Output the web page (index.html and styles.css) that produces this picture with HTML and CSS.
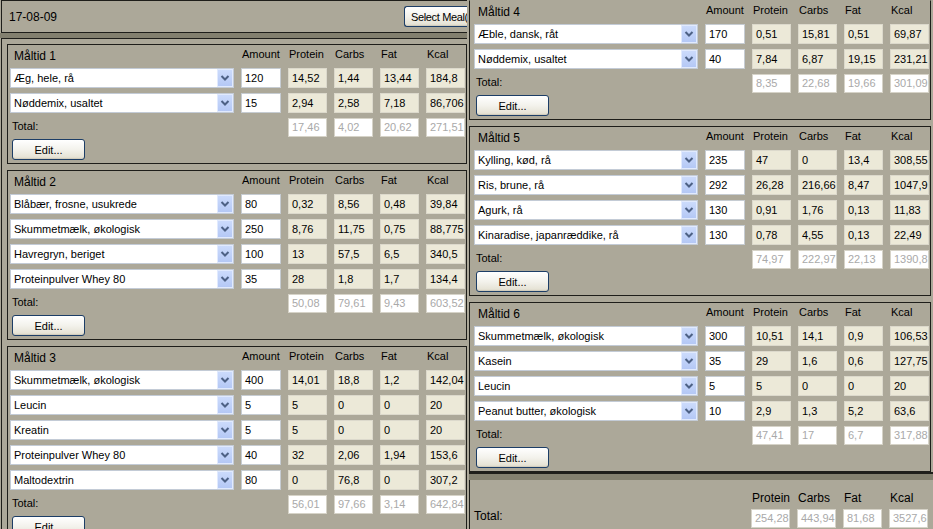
FILE: index.html
```html
<!DOCTYPE html>
<html lang="da">
<head>
  <meta charset="UTF-8">
  <title>Kostplan 17-08-09</title>
  <link rel="stylesheet" href="styles.css">
</head>
<body>
  <div class="app">
    <div class="pane pane-left">
      <div class="topbar">
        <span class="date">17-08-09</span>
        <button class="btn btn-select">Select Meal(s)...</button>
      </div>
      <div class="band"></div>
      <div class="meals">

        <div class="meal">
          <div class="grid">
            <div class="title">Måltid 1</div><div class="head">Amount</div><div class="head">Protein</div><div class="head">Carbs</div><div class="head">Fat</div><div class="head">Kcal</div>

            <div class="combo"><span>Æg, hele, rå</span><i class="arrow"><svg width="16" height="18" viewBox="0 0 16 18"><path d="M4.5 7 8 10.5 11.5 7" fill="none" stroke="#4d6185" stroke-width="2"/></svg></i></div>
            <div class="amount">120</div><div class="num">14,52</div><div class="num">1,44</div><div class="num">13,44</div><div class="num">184,8</div>

            <div class="combo"><span>Nøddemix, usaltet</span><i class="arrow"><svg width="16" height="18" viewBox="0 0 16 18"><path d="M4.5 7 8 10.5 11.5 7" fill="none" stroke="#4d6185" stroke-width="2"/></svg></i></div>
            <div class="amount">15</div><div class="num">2,94</div><div class="num">2,58</div><div class="num">7,18</div><div class="num">86,706</div>

            <div class="total-label">Total:</div><div class="sum">17,46</div><div class="sum">4,02</div><div class="sum">20,62</div><div class="sum">271,51</div>
          </div>
          <button class="btn btn-edit">Edit...</button>
        </div>

        <div class="meal">
          <div class="grid">
            <div class="title">Måltid 2</div><div class="head">Amount</div><div class="head">Protein</div><div class="head">Carbs</div><div class="head">Fat</div><div class="head">Kcal</div>

            <div class="combo"><span>Blåbær, frosne, usukrede</span><i class="arrow"><svg width="16" height="18" viewBox="0 0 16 18"><path d="M4.5 7 8 10.5 11.5 7" fill="none" stroke="#4d6185" stroke-width="2"/></svg></i></div>
            <div class="amount">80</div><div class="num">0,32</div><div class="num">8,56</div><div class="num">0,48</div><div class="num">39,84</div>

            <div class="combo"><span>Skummetmælk, økologisk</span><i class="arrow"><svg width="16" height="18" viewBox="0 0 16 18"><path d="M4.5 7 8 10.5 11.5 7" fill="none" stroke="#4d6185" stroke-width="2"/></svg></i></div>
            <div class="amount">250</div><div class="num">8,76</div><div class="num">11,75</div><div class="num">0,75</div><div class="num">88,775</div>

            <div class="combo"><span>Havregryn, beriget</span><i class="arrow"><svg width="16" height="18" viewBox="0 0 16 18"><path d="M4.5 7 8 10.5 11.5 7" fill="none" stroke="#4d6185" stroke-width="2"/></svg></i></div>
            <div class="amount">100</div><div class="num">13</div><div class="num">57,5</div><div class="num">6,5</div><div class="num">340,5</div>

            <div class="combo"><span>Proteinpulver Whey 80</span><i class="arrow"><svg width="16" height="18" viewBox="0 0 16 18"><path d="M4.5 7 8 10.5 11.5 7" fill="none" stroke="#4d6185" stroke-width="2"/></svg></i></div>
            <div class="amount">35</div><div class="num">28</div><div class="num">1,8</div><div class="num">1,7</div><div class="num">134,4</div>

            <div class="total-label">Total:</div><div class="sum">50,08</div><div class="sum">79,61</div><div class="sum">9,43</div><div class="sum">603,52</div>
          </div>
          <button class="btn btn-edit">Edit...</button>
        </div>

        <div class="meal">
          <div class="grid">
            <div class="title">Måltid 3</div><div class="head">Amount</div><div class="head">Protein</div><div class="head">Carbs</div><div class="head">Fat</div><div class="head">Kcal</div>

            <div class="combo"><span>Skummetmælk, økologisk</span><i class="arrow"><svg width="16" height="18" viewBox="0 0 16 18"><path d="M4.5 7 8 10.5 11.5 7" fill="none" stroke="#4d6185" stroke-width="2"/></svg></i></div>
            <div class="amount">400</div><div class="num">14,01</div><div class="num">18,8</div><div class="num">1,2</div><div class="num">142,04</div>

            <div class="combo"><span>Leucin</span><i class="arrow"><svg width="16" height="18" viewBox="0 0 16 18"><path d="M4.5 7 8 10.5 11.5 7" fill="none" stroke="#4d6185" stroke-width="2"/></svg></i></div>
            <div class="amount">5</div><div class="num">5</div><div class="num">0</div><div class="num">0</div><div class="num">20</div>

            <div class="combo"><span>Kreatin</span><i class="arrow"><svg width="16" height="18" viewBox="0 0 16 18"><path d="M4.5 7 8 10.5 11.5 7" fill="none" stroke="#4d6185" stroke-width="2"/></svg></i></div>
            <div class="amount">5</div><div class="num">5</div><div class="num">0</div><div class="num">0</div><div class="num">20</div>

            <div class="combo"><span>Proteinpulver Whey 80</span><i class="arrow"><svg width="16" height="18" viewBox="0 0 16 18"><path d="M4.5 7 8 10.5 11.5 7" fill="none" stroke="#4d6185" stroke-width="2"/></svg></i></div>
            <div class="amount">40</div><div class="num">32</div><div class="num">2,06</div><div class="num">1,94</div><div class="num">153,6</div>

            <div class="combo"><span>Maltodextrin</span><i class="arrow"><svg width="16" height="18" viewBox="0 0 16 18"><path d="M4.5 7 8 10.5 11.5 7" fill="none" stroke="#4d6185" stroke-width="2"/></svg></i></div>
            <div class="amount">80</div><div class="num">0</div><div class="num">76,8</div><div class="num">0</div><div class="num">307,2</div>

            <div class="total-label">Total:</div><div class="sum">56,01</div><div class="sum">97,66</div><div class="sum">3,14</div><div class="sum">642,84</div>
          </div>
          <button class="btn btn-edit">Edit...</button>
        </div>

      </div>
    </div>

    <div class="pane pane-right">
      <div class="meals">

        <div class="meal first">
          <div class="grid">
            <div class="title">Måltid 4</div><div class="head">Amount</div><div class="head">Protein</div><div class="head">Carbs</div><div class="head">Fat</div><div class="head">Kcal</div>

            <div class="combo"><span>Æble, dansk, råt</span><i class="arrow"><svg width="16" height="18" viewBox="0 0 16 18"><path d="M4.5 7 8 10.5 11.5 7" fill="none" stroke="#4d6185" stroke-width="2"/></svg></i></div>
            <div class="amount">170</div><div class="num">0,51</div><div class="num">15,81</div><div class="num">0,51</div><div class="num">69,87</div>

            <div class="combo"><span>Nøddemix, usaltet</span><i class="arrow"><svg width="16" height="18" viewBox="0 0 16 18"><path d="M4.5 7 8 10.5 11.5 7" fill="none" stroke="#4d6185" stroke-width="2"/></svg></i></div>
            <div class="amount">40</div><div class="num">7,84</div><div class="num">6,87</div><div class="num">19,15</div><div class="num">231,21</div>

            <div class="total-label">Total:</div><div class="sum">8,35</div><div class="sum">22,68</div><div class="sum">19,66</div><div class="sum">301,09</div>
          </div>
          <button class="btn btn-edit">Edit...</button>
        </div>

        <div class="meal">
          <div class="grid">
            <div class="title">Måltid 5</div><div class="head">Amount</div><div class="head">Protein</div><div class="head">Carbs</div><div class="head">Fat</div><div class="head">Kcal</div>

            <div class="combo"><span>Kylling, kød, rå</span><i class="arrow"><svg width="16" height="18" viewBox="0 0 16 18"><path d="M4.5 7 8 10.5 11.5 7" fill="none" stroke="#4d6185" stroke-width="2"/></svg></i></div>
            <div class="amount">235</div><div class="num">47</div><div class="num">0</div><div class="num">13,4</div><div class="num">308,55</div>

            <div class="combo"><span>Ris, brune, rå</span><i class="arrow"><svg width="16" height="18" viewBox="0 0 16 18"><path d="M4.5 7 8 10.5 11.5 7" fill="none" stroke="#4d6185" stroke-width="2"/></svg></i></div>
            <div class="amount">292</div><div class="num">26,28</div><div class="num">216,66</div><div class="num">8,47</div><div class="num">1047,9</div>

            <div class="combo"><span>Agurk, rå</span><i class="arrow"><svg width="16" height="18" viewBox="0 0 16 18"><path d="M4.5 7 8 10.5 11.5 7" fill="none" stroke="#4d6185" stroke-width="2"/></svg></i></div>
            <div class="amount">130</div><div class="num">0,91</div><div class="num">1,76</div><div class="num">0,13</div><div class="num">11,83</div>

            <div class="combo"><span>Kinaradise, japanræddike, rå</span><i class="arrow"><svg width="16" height="18" viewBox="0 0 16 18"><path d="M4.5 7 8 10.5 11.5 7" fill="none" stroke="#4d6185" stroke-width="2"/></svg></i></div>
            <div class="amount">130</div><div class="num">0,78</div><div class="num">4,55</div><div class="num">0,13</div><div class="num">22,49</div>

            <div class="total-label">Total:</div><div class="sum">74,97</div><div class="sum">222,97</div><div class="sum">22,13</div><div class="sum">1390,8</div>
          </div>
          <button class="btn btn-edit">Edit...</button>
        </div>

        <div class="meal">
          <div class="grid">
            <div class="title">Måltid 6</div><div class="head">Amount</div><div class="head">Protein</div><div class="head">Carbs</div><div class="head">Fat</div><div class="head">Kcal</div>

            <div class="combo"><span>Skummetmælk, økologisk</span><i class="arrow"><svg width="16" height="18" viewBox="0 0 16 18"><path d="M4.5 7 8 10.5 11.5 7" fill="none" stroke="#4d6185" stroke-width="2"/></svg></i></div>
            <div class="amount">300</div><div class="num">10,51</div><div class="num">14,1</div><div class="num">0,9</div><div class="num">106,53</div>

            <div class="combo"><span>Kasein</span><i class="arrow"><svg width="16" height="18" viewBox="0 0 16 18"><path d="M4.5 7 8 10.5 11.5 7" fill="none" stroke="#4d6185" stroke-width="2"/></svg></i></div>
            <div class="amount">35</div><div class="num">29</div><div class="num">1,6</div><div class="num">0,6</div><div class="num">127,75</div>

            <div class="combo"><span>Leucin</span><i class="arrow"><svg width="16" height="18" viewBox="0 0 16 18"><path d="M4.5 7 8 10.5 11.5 7" fill="none" stroke="#4d6185" stroke-width="2"/></svg></i></div>
            <div class="amount">5</div><div class="num">5</div><div class="num">0</div><div class="num">0</div><div class="num">20</div>

            <div class="combo"><span>Peanut butter, økologisk</span><i class="arrow"><svg width="16" height="18" viewBox="0 0 16 18"><path d="M4.5 7 8 10.5 11.5 7" fill="none" stroke="#4d6185" stroke-width="2"/></svg></i></div>
            <div class="amount">10</div><div class="num">2,9</div><div class="num">1,3</div><div class="num">5,2</div><div class="num">63,6</div>

            <div class="total-label">Total:</div><div class="sum">47,41</div><div class="sum">17</div><div class="sum">6,7</div><div class="sum">317,88</div>
          </div>
          <button class="btn btn-edit">Edit...</button>
        </div>

      </div>
      <div class="band band-bottom"></div>
      <div class="summary">
        <div class="summary-grid">
          <div></div><div class="head">Protein</div><div class="head">Carbs</div><div class="head">Fat</div><div class="head">Kcal</div>
          <div class="total-label">Total:</div><div class="sum">254,28</div><div class="sum">443,94</div><div class="sum">81,68</div><div class="sum">3527,6</div>
        </div>
      </div>
    </div>
  </div>
</body>
</html>
```

FILE: styles.css
```css
body {
  margin: 0;
  background: #aca899;
  color: #000;
  font-family: "Liberation Sans", Arial, sans-serif;
  font-size: 11px;
}

.app {
  display: flex;
  width: 933px;
  height: 529px;
  overflow: hidden;
}

.pane {
  height: 529px;
  overflow: hidden;
  background: #aca899;
}

.pane-left {
  width: 467px;
  flex-shrink: 0;
}

.pane-right {
  flex: 1;
  padding-left: 2px;
}

/* top bar with the date */
.topbar {
  display: flex;
  align-items: center;
  width: 600px;
  height: 31px;
  margin-left: 1px;
  padding-left: 7px;
  border: 1px solid #1e1e1a;
}

.date {
  flex: 0 0 395px;
  font-size: 12px;
}

.band {
  height: 5px;
  background: #83806f;
}

.meals {
  margin-left: 1px;
  padding: 5px 0 0 5px;
  border-top: 1px solid #1e1e1a;
  border-left: 1px solid #1e1e1a;
}

.pane-right .meals {
  margin: 0;
  padding: 0;
  border: none;
}

/* one meal box */
.meal {
  box-sizing: border-box;
  width: 460px;
  margin-bottom: 6px;
  padding: 0 1px 3px 2px;
  border: 1px solid #1e1e1a;
}

.pane-right .meal {
  width: 462px;
  padding-left: 4px;
}

.pane-right .meal.first {
  border-top-color: #aca899;
}

.grid {
  display: grid;
  grid-template-columns: 224px 40px repeat(4, 39px);
  grid-template-rows: 18px;
  grid-auto-rows: 20px;
  column-gap: 7px;
  row-gap: 5px;
}

.title {
  padding: 2px 0 0 4px;
  line-height: 18px;
  font-size: 12px;
}

.head {
  padding-left: 1px;
  line-height: 18px;
  white-space: nowrap;
}

.combo {
  display: flex;
  box-sizing: border-box;
  height: 20px;
  background: #fff;
  border: 1px solid #c3cbd6;
}

.combo span {
  flex: 1;
  padding-left: 3px;
  line-height: 18px;
  white-space: nowrap;
  overflow: hidden;
}

.arrow {
  display: block;
  width: 16px;
  height: 18px;
  background: linear-gradient(#cddcfc, #b3c7f5);
  box-shadow: inset 0 0 0 1px #e1eafe;
}

.arrow svg {
  display: block;
}

.amount,
.num,
.sum {
  box-sizing: border-box;
  padding-left: 3px;
  white-space: nowrap;
  overflow: hidden;
}

.amount {
  height: 20px;
  line-height: 18px;
  background: #fff;
  border: 1px solid #c6ccd2;
}

.num {
  height: 20px;
  line-height: 18px;
  background: #ece9d8;
  border: 1px solid #dcd9cc;
}

.sum {
  height: 19px;
  line-height: 17px;
  color: #a9a9a9;
  background: #fff;
  border: 1px solid #d6d3c8;
}

.total-label {
  grid-column: span 2;
  padding-left: 2px;
  line-height: 16px;
}

/* XP style buttons */
.btn {
  box-sizing: border-box;
  height: 21px;
  padding: 0;
  font: inherit;
  color: #000;
  background: linear-gradient(#fff, #f3f2ec 50%, #e6e3d6 90%, #d6d0c0);
  border: 1px solid #1c3d66;
  border-radius: 3px;
  box-shadow: inset 0 -1px 0 #d2cdbd;
}

.btn-edit {
  display: block;
  width: 73px;
  margin: 1px 0 0 2px;
}

/* the pane on the right covers the end of this button */
.btn-select {
  flex: 0 0 auto;
  width: 64px;
  padding-left: 6px;
  overflow: hidden;
  text-align: left;
  font-size: 11px;
  letter-spacing: -0.35px;
  white-space: nowrap;
  border-right-width: 0;
  border-radius: 3px 0 0 3px;
}

.band-bottom {
  height: 6px;
  margin-top: -6px;
  background: #83806f;
  border-top: 2px solid #1e1e1a;
}

.summary {
  height: 60px;
  padding: 11px 0 0 4px;
  border-left: 1px solid #1e1e1a;
}

.summary-grid {
  display: grid;
  grid-template-columns: 270px repeat(4, 39px);
  grid-template-rows: 15px 19px;
  column-gap: 7px;
  row-gap: 3px;
}

.summary-grid .head {
  font-size: 12px;
  line-height: 15px;
}

.summary-grid .total-label {
  grid-column: auto;
  padding-left: 0;
  line-height: 14px;
  font-size: 12px;
}
```
